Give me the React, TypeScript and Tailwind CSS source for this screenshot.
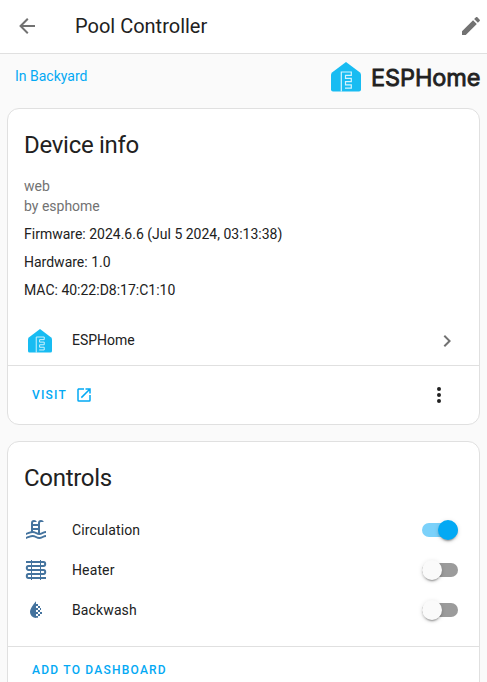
import { useState, type ReactNode } from 'react';

function Icon({ d, className }: { d: string; className: string }) {
  return (
    <svg viewBox="0 0 24 24" fill="currentColor" className={`h-6 w-6 shrink-0 ${className}`}>
      <path d={d} />
    </svg>
  );
}

const back = 'M20,11V13H8L13.5,18.5L12.08,19.92L4.16,12L12.08,4.08L13.5,5.5L8,11H20Z';
const pencil =
  'M20.71,7.04C21.1,6.65 21.1,6 20.71,5.63L18.37,3.29C18,2.9 17.35,2.9 16.96,3.29L15.12,5.12L18.87,8.87M3,17.25V21H6.75L17.81,9.93L14.06,6.18L3,17.25Z';
const chevron = 'M8.59,16.58L13.17,12L8.59,7.41L10,6L16,12L10,18L8.59,16.58Z';
const dots =
  'M12,16A2,2 0 0,1 14,18A2,2 0 0,1 12,20A2,2 0 0,1 10,18A2,2 0 0,1 12,16M12,10A2,2 0 0,1 14,12A2,2 0 0,1 12,14A2,2 0 0,1 10,12A2,2 0 0,1 12,10M12,4A2,2 0 0,1 14,6A2,2 0 0,1 12,8A2,2 0 0,1 10,6A2,2 0 0,1 12,4Z';
const openInNew =
  'M14,3V5H17.59L7.76,14.83L9.17,16.24L19,6.41V10H21V3M19,19H5V5H12V3H5C3.89,3 3,3.9 3,5V19A2,2 0 0,0 5,21H19A2,2 0 0,0 21,19V12H19V19Z';
const pool =
  'M2,15C3.67,14.25 5.33,13.5 7,13.17V5A3,3 0 0,1 10,2C11.31,2 12.42,2.83 12.83,4H10A1,1 0 0,0 9,5V6H14V5A3,3 0 0,1 17,2C18.31,2 19.42,2.83 19.83,4H17A1,1 0 0,0 16,5V14.94C18,14.62 20,13 22,13V15C19.78,15 17.56,17 15.33,17C13.11,17 10.89,15 8.67,15C6.44,15 4.22,16 2,17V15M14,8H9V10H14V8M14,12H9V13C10.67,13.16 12.33,14.31 14,14.79V12M2,19C4.22,18 6.44,17 8.67,17C10.89,17 13.11,19 15.33,19C17.56,19 19.78,17 22,17V19C19.78,19 17.56,21 15.33,21C13.11,21 10.89,19 8.67,19C6.44,19 4.22,20 2,21V19Z';

function HeatingCoil() {
  return (
    <svg viewBox="0 0 24 24" fill="none" stroke="currentColor" className="h-6 w-6 text-[#44739e]">
      <path strokeWidth="2" d="M2 4H19.5A1.5 1.75 0 0 1 19.5 8H4.5A1.5 1.75 0 0 0 4.5 12H19.5A1.5 1.75 0 0 1 19.5 16H4.5A1.5 1.75 0 0 0 4.5 20H22" />
      <path strokeWidth="1" d="M7.5 2V22M16.5 2V22" />
    </svg>
  );
}

function WaterOpacity() {
  return (
    <svg viewBox="0 0 24 24" fill="currentColor" className="h-6 w-6 text-[#44739e]">
      <path d="M12 3.2C10 5.7 6 10.4 6 14A6 6 0 0 0 12 20Z" />
      <path d="M12 6h2v2h-2zM14 8h2v2h-2zM12 10h2v2h-2zM16 10h1v2h-1zM14 12h2v2h-2zM12 14h2v2h-2zM16 14h2v2h-2zM14 16h2v2h-2zM12 18h2v1.7h-2z" />
    </svg>
  );
}

function House({ className }: { className: string }) {
  return (
    <svg viewBox="0 0 30 30" fill="none" className={className}>
      <path d="M15 0L29 10.5Q30 11.5 30 13V27.5Q30 29.5 28 29.5H2Q0 29.5 0 27.5V13Q0 11.5 1 10.5Z" fill="#18bcf2" />
      <path d="M10.3 29.5V10H20.3V13.3H14.5V16.4H20.3V19.7H14.5V22.8H20.3V26.2H14" stroke="#d5f3fd" strokeWidth="1.2" />
    </svg>
  );
}

function Toggle({ initial }: { initial: boolean }) {
  const [on, setOn] = useState(initial);
  return (
    <button
      role="switch"
      aria-checked={on}
      onClick={() => setOn(!on)}
      className={`flex h-[14px] w-9 items-center rounded-full ${on ? 'justify-end bg-[#7bd1fa]' : 'justify-start bg-[#9b9b9b]'}`}
    >
      <span
        className={`h-5 w-5 shrink-0 rounded-full shadow-[0_3px_1px_-2px_rgba(0,0,0,0.2),0_2px_2px_rgba(0,0,0,0.14),0_1px_5px_rgba(0,0,0,0.12)] ${on ? 'bg-[#03a9f4]' : 'bg-[#fafafa]'}`}
      />
    </button>
  );
}

function Control({ icon, name, on = false }: { icon: ReactNode; name: string; on?: boolean }) {
  return (
    <div className="flex h-10 items-center pl-4 pr-[21px]">
      {icon}
      <span className="ml-6 flex-1 tracking-[0.12px]">{name}</span>
      <Toggle initial={on} />
    </div>
  );
}

export default function App() {
  return (
    <div className="h-[682px] w-[487px] overflow-hidden bg-[#fafafa] font-[Roboto,sans-serif] text-sm leading-5 text-[#212121]">
      <header className="flex h-[54px] items-center border-b border-[#e0e0e0] bg-white pb-px pl-[15px] pr-1">
        <Icon d={back} className="text-[#727272]" />
        <h1 className="ml-9 flex-1 text-xl">Pool Controller</h1>
        <Icon d={pencil} className="text-[#727272]" />
      </header>

      <div className="flex h-[54px] items-start pl-[15px]">
        <a className="mt-3 w-[316px] text-[#03a9f4]">In Backyard</a>
        <div className="mt-2 flex h-[30px] items-center">
          <House className="h-[30px] w-[30px]" />
          <span className="ml-2.5 mt-px whitespace-nowrap font-[Inter,sans-serif] text-[23.5px] font-normal tracking-[-0.1px] [-webkit-text-stroke:0.8px_#212121]">
            ESPHome
          </span>
        </div>
      </div>

      <section className="ml-[7px] h-[317px] w-[473px] rounded-xl border border-[#e0e0e0] bg-white">
        <h2 className="px-4 pt-3 text-2xl leading-[48px] tracking-[-0.288px]">Device info</h2>
        <div className="px-4 pt-[7px]">
          <p className="text-[#727272]">web</p>
          <p className="text-[#727272]">by esphome</p>
          <p className="mt-2">Firmware: 2024.6.6 (Jul 5 2024, 03:13:38)</p>
          <p className="mt-2">Hardware: 1.0</p>
          <p className="mt-2">MAC: 40:22:D8:17:C1:10</p>
        </div>
        <div className="mt-4 flex h-[49px] items-center pl-5 pr-5">
          <House className="mt-px h-6 w-6" />
          <span className="-mt-px ml-5 flex-1">ESPHome</span>
          <Icon d={chevron} className="text-[#727272]" />
        </div>
        <div className="flex h-[59px] items-center justify-between border-t border-[#e0e0e0] pl-6 pr-7">
          <a className="flex items-center gap-2 text-xs font-medium tracking-[1.2px] text-[#03a9f4]">
            VISIT
            <svg viewBox="0 0 24 24" fill="currentColor" className="h-[18px] w-[18px]">
              <path d={openInNew} />
            </svg>
          </a>
          <Icon d={dots} className="text-[#212121]" />
        </div>
      </section>

      <section className="ml-[7px] mt-4 h-[260px] w-[473px] rounded-t-xl border border-[#e0e0e0] bg-white">
        <h2 className="px-4 pt-3 text-2xl leading-[48px] tracking-[-0.288px]">Controls</h2>
        <div className="h-[144px] pt-2">
          <Control icon={<Icon d={pool} className="text-[#44739e]" />} name="Circulation" on />
          <Control icon={<HeatingCoil />} name="Heater" />
          <Control icon={<WaterOpacity />} name="Backwash" />
        </div>
        <div className="flex h-[46px] items-center border-t border-[#e0e0e0] pl-6 text-xs font-medium tracking-[1.23px] text-[#03a9f4]">
          ADD TO DASHBOARD
        </div>
      </section>
    </div>
  );
}
